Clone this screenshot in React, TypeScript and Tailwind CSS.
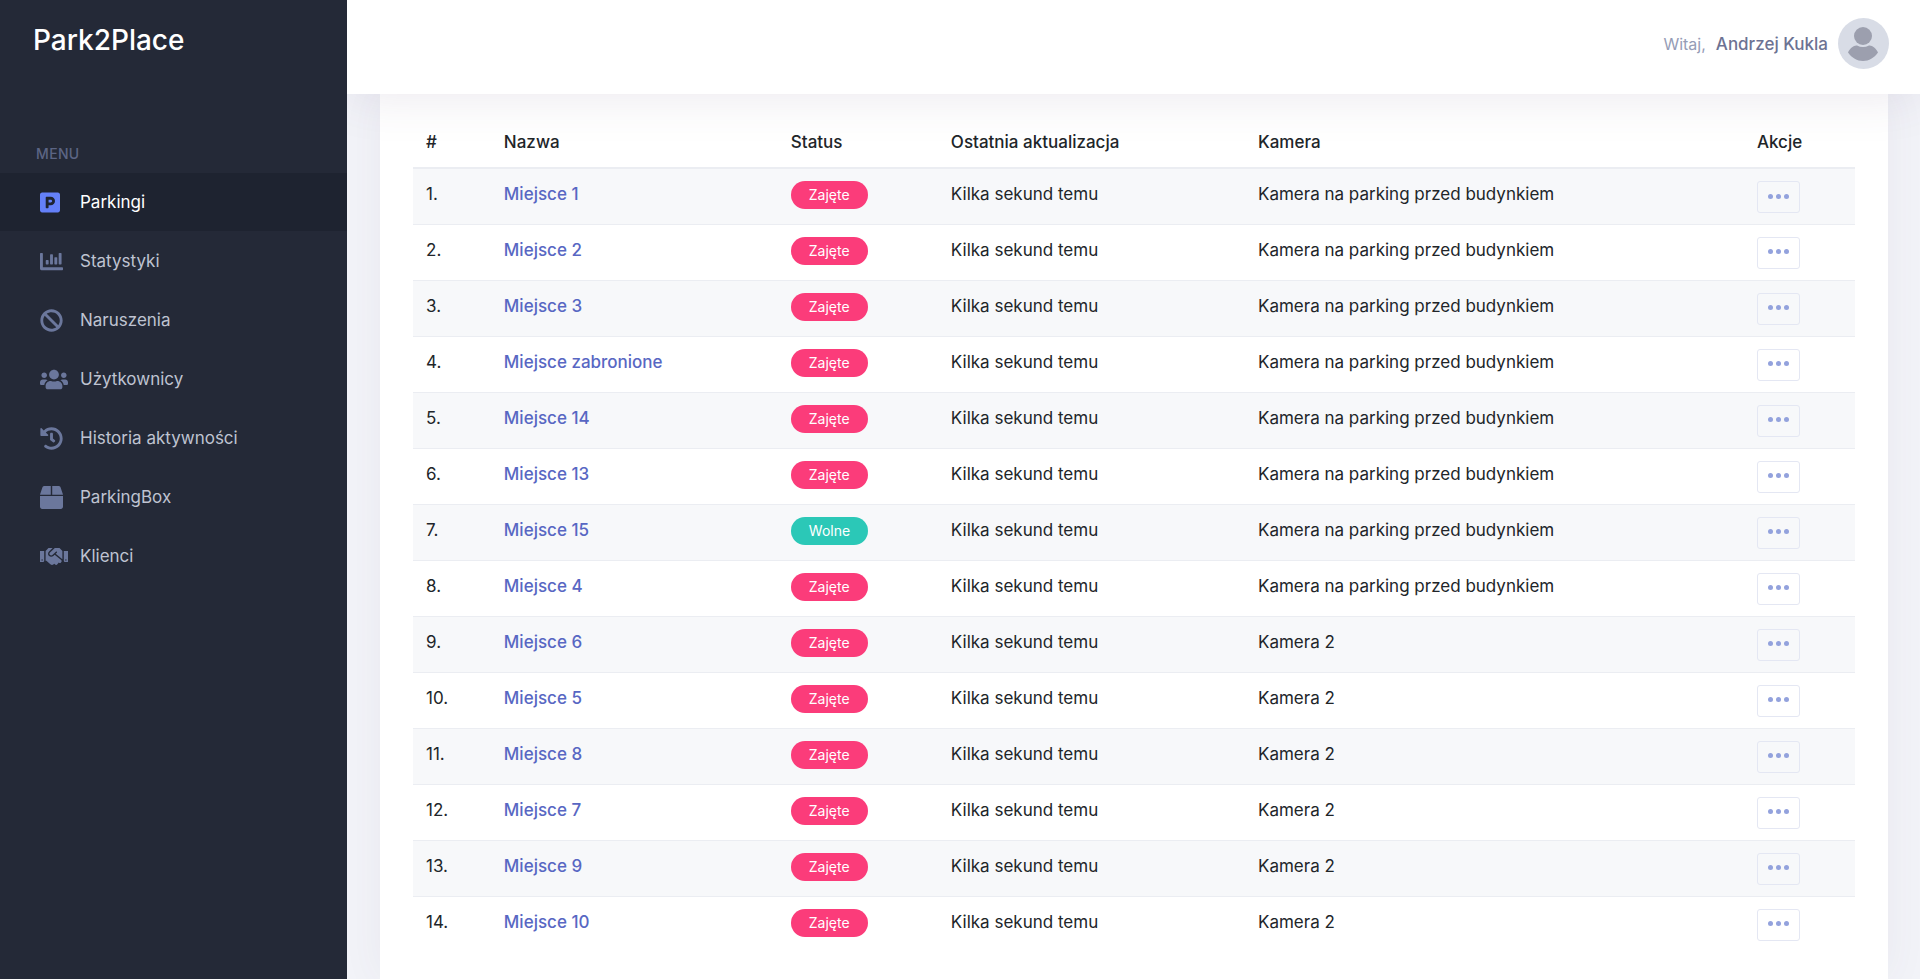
import React from "react";
import {
  FaBan,
  FaBox,
  FaChartBar,
  FaHandshake,
  FaHistory,
  FaParking,
  FaUsers,
} from "react-icons/fa";
import type { IconType } from "react-icons";

interface MenuItemProps {
  icon: IconType;
  iconSize: string;
  label: string;
  active?: boolean;
}

const menu: MenuItemProps[] = [
  { icon: FaParking, iconSize: "h-[23px] w-5", label: "Parkingi", active: true },
  { icon: FaChartBar, iconSize: "h-[23px] w-[23px]", label: "Statystyki" },
  { icon: FaBan, iconSize: "h-[23px] w-[23px]", label: "Naruszenia" },
  { icon: FaUsers, iconSize: "h-[23px] w-7", label: "Użytkownicy" },
  { icon: FaHistory, iconSize: "h-[23px] w-[23px]", label: "Historia aktywności" },
  { icon: FaBox, iconSize: "h-[23px] w-[23px]", label: "ParkingBox" },
  { icon: FaHandshake, iconSize: "h-[23px] w-7", label: "Klienci" },
];

interface Spot {
  name: string;
  free?: boolean;
  camera: string;
}

const FRONT = "Kamera na parking przed budynkiem";
const SECOND = "Kamera 2";

const spots: Spot[] = [
  { name: "Miejsce 1", camera: FRONT },
  { name: "Miejsce 2", camera: FRONT },
  { name: "Miejsce 3", camera: FRONT },
  { name: "Miejsce zabronione", camera: FRONT },
  { name: "Miejsce 14", camera: FRONT },
  { name: "Miejsce 13", camera: FRONT },
  { name: "Miejsce 15", free: true, camera: FRONT },
  { name: "Miejsce 4", camera: FRONT },
  { name: "Miejsce 6", camera: SECOND },
  { name: "Miejsce 5", camera: SECOND },
  { name: "Miejsce 8", camera: SECOND },
  { name: "Miejsce 7", camera: SECOND },
  { name: "Miejsce 9", camera: SECOND },
  { name: "Miejsce 10", camera: SECOND },
];

function MenuItem({ icon: Icon, iconSize, label, active }: MenuItemProps) {
  return (
    <li className="mb-px">
      <a
        href="#"
        className={
          active
            ? "flex h-[58px] items-center bg-[#1e2330] pl-10 text-white"
            : "flex h-[58px] items-center pl-10 text-[#bfc3d1]"
        }
      >
        <span className={active ? "w-10 text-[#6480f8]" : "w-10 text-[#6b779c]"}>
          <Icon className={iconSize} />
        </span>
        <span>{label}</span>
      </a>
    </li>
  );
}

function Sidebar() {
  return (
    <aside className="relative z-20 w-[347px] shrink-0 bg-[#242937]">
      <a href="#" className="block px-[33px] pt-5 text-[28px] leading-10 font-medium text-white">
        Park2Place
      </a>
      <nav className="pt-[84px]">
        <h4 className="mb-[9px] px-9 text-sm leading-5 font-medium tracking-wide text-[#5c6584]">
          MENU
        </h4>
        <ul>
          {menu.map((item) => (
            <MenuItem key={item.label} {...item} />
          ))}
        </ul>
      </nav>
    </aside>
  );
}

function Header() {
  return (
    <header className="relative z-10 flex h-[94px] items-start justify-end bg-white pt-[18px] pr-[31px] shadow-[0_0_52px_rgba(82,63,105,0.13)]">
      <div className="flex items-center">
        <span className="mr-2.5 text-base text-[#959cb6]">Witaj,</span>
        <span className="mr-2.5 text-[17px] font-medium text-[#6c7293]">Andrzej Kukla</span>
        <svg viewBox="0 0 51 51" className="size-[51px]" aria-hidden="true">
          <circle cx="25.5" cy="25.5" r="25.5" fill="#d8dce6" />
          <circle cx="25" cy="18" r="9" fill="#9c9fae" />
          <path
            d="M10 34.5C12 30 16 27 19 27.500C23 29.500 27 29.500 31 27.500C34 27 38 30 40 34.500C36 40 31 43 25 43C19 43 14 40 10 34.500Z"
            fill="#9c9fae"
          />
        </svg>
      </div>
    </header>
  );
}

function SpotRow({ index, spot }: { index: number; spot: Spot }) {
  return (
    <tr className="h-14 border-t border-[#ebedf2] odd:bg-[#f7f8fa]">
      <td className="px-[13px] pt-3">{index}.</td>
      <td className="px-[13px] pt-3">
        <a href="#" className="font-medium text-[#5867c3]">
          {spot.name}
        </a>
      </td>
      <td className="px-[13px] pt-3">
        <span
          className={
            spot.free
              ? "inline-flex h-7 items-center rounded-[14px] bg-[#2bc8b7] px-[18px] text-sm text-white"
              : "inline-flex h-7 items-center rounded-[14px] bg-[#fb3c7a] px-[18px] text-sm text-white"
          }
        >
          {spot.free ? "Wolne" : "Zajęte"}
        </span>
      </td>
      <td className="px-[13px] pt-3">Kilka sekund temu</td>
      <td className="px-[13px] pt-3">{spot.camera}</td>
      <td className="px-[13px] pt-3">
        <button
          type="button"
          aria-label="Akcje"
          className="flex h-8 w-[43px] items-center justify-center gap-[3px] rounded-[3px] border border-[#e4e7f3] pb-0.5"
        >
          <i className="size-[5px] rounded-full bg-[#93a2dd]" />
          <i className="size-[5px] rounded-full bg-[#93a2dd]" />
          <i className="size-[5px] rounded-full bg-[#93a2dd]" />
        </button>
      </td>
    </tr>
  );
}

function SpotTable() {
  return (
    <table className="w-full table-fixed border-collapse text-left">
      <thead>
        <tr className="h-[52px] border-b-2 border-[#ebedf2]">
          <th className="w-[5.4%] px-[13px] font-medium">#</th>
          <th className="w-[19.9%] px-[13px] font-medium">Nazwa</th>
          <th className="w-[11.1%] px-[13px] font-medium">Status</th>
          <th className="w-[21.3%] px-[13px] font-medium">Ostatnia aktualizacja</th>
          <th className="w-[34.6%] px-[13px] font-medium">Kamera</th>
          <th className="px-[13px] font-medium">Akcje</th>
        </tr>
      </thead>
      <tbody className="[&_td]:align-top">
        {spots.map((spot, i) => (
          <SpotRow key={spot.name} index={i + 1} spot={spot} />
        ))}
      </tbody>
    </table>
  );
}

export default function App() {
  return (
    <div className="flex min-h-screen bg-[#f2f3f8] font-['Inter','Liberation_Sans',sans-serif] text-[17px] leading-[26px] text-[#212529]">
      <Sidebar />
      <div className="flex min-w-0 flex-1 flex-col">
        <Header />
        <main className="flex flex-1 flex-col pr-8 pl-[33px]">
          <section className="flex-1 bg-white px-[33px] pt-[22px] shadow-[0_0_40px_rgba(82,63,105,0.06)]">
            <SpotTable />
          </section>
        </main>
      </div>
    </div>
  );
}
